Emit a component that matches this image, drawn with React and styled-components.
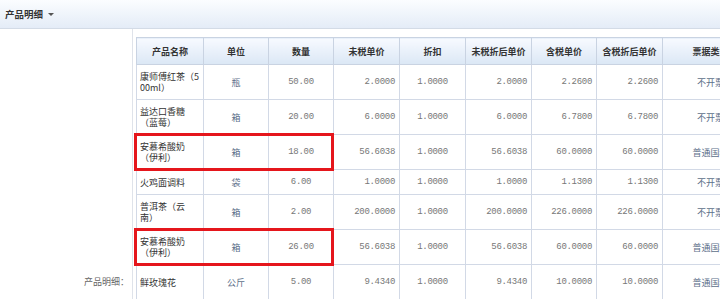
import React from "react";
import styled, { createGlobalStyle } from "styled-components";

const Global = createGlobalStyle`
  html, body { margin: 0; padding: 0; overflow: hidden; background: #fff; }
  body { font-family: "Noto Sans CJK SC", "Liberation Sans", sans-serif; }
`;

const Page = styled.div`
  width: 720px;
  display: flex;
  flex-direction: column;
`;

const TitleBar = styled.div`
  height: 28px;
  border-bottom: 1px solid #d3dbe6;
  background: linear-gradient(#fbfdff, #e4ecf7);
  display: flex;
  align-items: center;
  gap: 5px;
  padding-left: 5px;
  font-size: 9.5px;
  font-weight: 700;
  color: #333;
`;

const Caret = styled.span`
  width: 0;
  height: 0;
  border-left: 3px solid transparent;
  border-right: 3px solid transparent;
  border-top: 3px solid #555;
  margin-top: 1px;
`;

const FormRow = styled.div`
  display: flex;
  align-items: stretch;
`;

const Label = styled.div`
  flex: 0 0 129px;
  border-right: 1px solid #dfe3ea;
  display: flex;
  align-items: center;
  justify-content: flex-end;
  padding-right: 3px;
  font-size: 9px;
  color: #666;
`;

const Field = styled.div`
  padding: 8px 0 8px 3px;
`;

const Table = styled.table`
  border-collapse: collapse;
  table-layout: fixed;
  border: 1px solid #c9d3e2;
  font-size: 9px;
`;

const Th = styled.th`
  height: 26px;
  padding: 0;
  background: linear-gradient(#f7faff, #dbe7f5);
  border: 1px solid #c9d3e2;
  font-weight: 700;
  color: #333;
  text-align: center;
`;

const Row = styled.tr`
  height: ${(p) => (p.$short ? 25 : 35)}px;
`;

const Td = styled.td`
  position: relative;
  padding: 0 4px;
  border: 1px solid #d2d9e6;
  text-align: ${(p) => p.$align || "center"};
  color: ${(p) => p.$color || "#777"};
  font-family: ${(p) =>
    p.$num
      ? '"Liberation Mono", "DejaVu Sans Mono", monospace'
      : '"Noto Sans CJK SC", "Liberation Sans", sans-serif'};
  letter-spacing: ${(p) => (p.$num ? "-0.3px" : "0")};
  line-height: 11px;
  white-space: nowrap;
  overflow: hidden;
`;

const NameTd = styled(Td)`
  overflow: visible;
  padding-left: 3px;
`;

const Highlight = styled.span`
  position: absolute;
  top: -2px;
  bottom: -2px;
  left: -3px;
  width: 200px;
  box-sizing: border-box;
  border: 3px solid #e5161c;
  pointer-events: none;
`;

const cols = [67, 65, 65, 66, 66, 66, 65, 66, 96, 80, 80];
const heads = [
  "产品名称",
  "单位",
  "数量",
  "未税单价",
  "折扣",
  "未税折后单价",
  "含税单价",
  "含税折后单价",
  "票据类型",
  "税率",
  "备注",
];

const rows = [
  { name: ["康师傅红茶（5", "00ml）"], unit: "瓶", qty: "50.00", p: "2.0000", d: "1.0000", pd: "2.0000", t: "2.2600", td: "2.2600", inv: "不开票" },
  { name: ["益达口香糖", "（蓝莓）"], unit: "箱", qty: "20.00", p: "6.0000", d: "1.0000", pd: "6.0000", t: "6.7800", td: "6.7800", inv: "不开票" },
  { name: ["安慕希酸奶", "（伊利）"], unit: "箱", qty: "18.00", p: "56.6038", d: "1.0000", pd: "56.6038", t: "60.0000", td: "60.0000", inv: "普通国税", hl: true },
  { name: ["火鸡面调料"], unit: "袋", qty: "6.00", p: "1.0000", d: "1.0000", pd: "1.0000", t: "1.1300", td: "1.1300", inv: "不开票", short: true },
  { name: ["普洱茶（云", "南）"], unit: "箱", qty: "2.00", p: "200.0000", d: "1.0000", pd: "200.0000", t: "226.0000", td: "226.0000", inv: "不开票" },
  { name: ["安慕希酸奶", "（伊利）"], unit: "箱", qty: "26.00", p: "56.6038", d: "1.0000", pd: "56.6038", t: "60.0000", td: "60.0000", inv: "普通国税", hl: true },
  { name: ["鲜玫瑰花"], unit: "公斤", qty: "5.00", p: "9.4340", d: "1.0000", pd: "9.4340", t: "10.0000", td: "10.0000", inv: "普通国税" },
  { name: ["农夫山泉（5", "50ml）"], unit: "箱", qty: "10.00", p: "20.0000", d: "1.0000", pd: "20.0000", t: "22.6000", td: "22.6000", inv: "不开票" },
  { name: ["旺仔牛奶（2", "45ml）"], unit: "箱", qty: "12.00", p: "40.0000", d: "1.0000", pd: "40.0000", t: "45.2000", td: "45.2000", inv: "不开票" },
  { name: ["红富士苹果"], unit: "公斤", qty: "8.00", p: "8.8496", d: "1.0000", pd: "8.8496", t: "10.0000", td: "10.0000", inv: "不开票", short: true },
  { name: ["德芙巧克力", "（丝滑）"], unit: "盒", qty: "4.00", p: "17.6991", d: "1.0000", pd: "17.6991", t: "20.0000", td: "20.0000", inv: "普通国税" },
  { name: ["金龙鱼食用", "油（5L）"], unit: "桶", qty: "3.00", p: "61.9469", d: "1.0000", pd: "61.9469", t: "70.0000", td: "70.0000", inv: "普通国税" },
  { name: ["奥利奥饼干", "（原味）"], unit: "盒", qty: "6.00", p: "8.8496", d: "1.0000", pd: "8.8496", t: "10.0000", td: "10.0000", inv: "不开票" },
  { name: ["蒙牛纯牛奶"], unit: "箱", qty: "5.00", p: "44.2478", d: "1.0000", pd: "44.2478", t: "50.0000", td: "50.0000", inv: "不开票", short: true },
];

export default function App() {
  return (
    <>
      <Global />
      <Page>
        <TitleBar>
          产品明细
          <Caret />
        </TitleBar>
        <FormRow>
          <Label>产品明细：</Label>
          <Field>
            <Table style={{ width: cols.reduce((a, b) => a + b, 0) }}>
              <colgroup>
                {cols.map((w, i) => (
                  <col key={i} style={{ width: w }} />
                ))}
              </colgroup>
              <thead>
                <tr>
                  {heads.map((h) => (
                    <Th key={h}>{h}</Th>
                  ))}
                </tr>
              </thead>
              <tbody>
                {rows.map((r, i) => (
                  <Row key={i} $short={r.short}>
                    <NameTd $align="left" $color="#333">
                      {r.name.map((l, j) => (
                        <React.Fragment key={j}>
                          {j > 0 && <br />}
                          {l}
                        </React.Fragment>
                      ))}
                      {r.hl && <Highlight />}
                    </NameTd>
                    <Td $color="#5d6f8a">{r.unit}</Td>
                    <Td $num>{r.qty}</Td>
                    <Td $num $align="right">{r.p}</Td>
                    <Td $num>{r.d}</Td>
                    <Td $num $align="right">{r.pd}</Td>
                    <Td $num $align="right">{r.t}</Td>
                    <Td $num $align="right">{r.td}</Td>
                    <Td $color="#5d6f8a">{r.inv}</Td>
                    <Td $num>13%</Td>
                    <Td></Td>
                  </Row>
                ))}
              </tbody>
            </Table>
          </Field>
        </FormRow>
      </Page>
    </>
  );
}
